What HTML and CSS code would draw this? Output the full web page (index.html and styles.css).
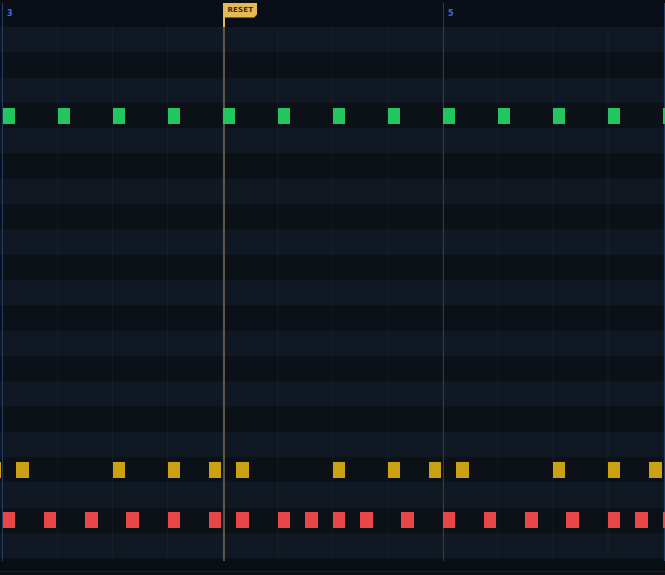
FILE: index.html
```html
<!DOCTYPE html>
<html lang="en">
<head>
    <meta charset="UTF-8">
    <meta name="viewport" content="width=device-width, initial-scale=1.0">
    <title>Pattern Roll</title>
    <link rel="stylesheet" href="styles.css">
</head>
<body>
    <div class="roll" id="roll">
        <div class="ruler" id="ruler"></div>
        <div class="lanes" id="lanes"></div>

        <div class="playhead">
            <div class="playhead-pole"></div>
            <div class="flag">RESET</div>
        </div>
    </div>
    <div class="footer"></div>

    <script>
        const STEP = 13.754;        // one 16th
        const ORIGIN = 2.5;
        const BAR_X = [2, 222.5, 443, 663.5];
        const LANE_COUNT = 21;

        const ruler = document.getElementById('ruler');
        const lanes = document.getElementById('lanes');
        const roll = document.getElementById('roll');

        const tracks = {
            3: { color: 'green', steps: [0, 4, 8, 12, 16, 20, 24, 28, 32, 36, 40, 44, 48] },
            17: { color: 'yellow', steps: [-1, 1, 8, 12, 15, 17, 24, 28, 31, 33, 40, 44, 47] },
            19: { color: 'red', steps: [0, 3, 6, 9, 12, 15, 17, 20, 22, 24, 26, 29, 32, 35, 38, 41, 44, 46, 48] }
        };

        for (let i = 0; i < LANE_COUNT; i++) {
            const lane = document.createElement('div');
            lane.className = i % 2 === 0 ? 'lane lane-light' : 'lane lane-dark';

            const track = tracks[i];
            if (track) {
                track.steps.forEach(step => {
                    const note = document.createElement('div');
                    note.className = 'note note-' + track.color;
                    note.style.left = (ORIGIN + step * STEP) + 'px';
                    lane.appendChild(note);
                });
            }
            lanes.appendChild(lane);
        }

        // bar lines + labels (bar 3 starts at the left edge, bar 4 sits under the playhead)
        BAR_X.forEach((x, b) => {
            const line = document.createElement('div');
            line.className = 'bar-line';
            line.style.left = x + 'px';
            roll.appendChild(line);

            if (b === 0 || b === 2) {
                const label = document.createElement('span');
                label.className = 'bar-label';
                label.textContent = 3 + b;
                label.style.left = (x + 5) + 'px';
                ruler.appendChild(label);
            }
        });
    </script>
</body>
</html>
```

FILE: styles.css
```css
body {
    margin: 0;
    padding: 0;
    background-color: #0a0e15;
    font-family: "DejaVu Sans", sans-serif;
    overflow: hidden;
}
.roll {
    position: relative;
    width: 665px;
    height: 561px;
    overflow: hidden;
    background-color: #0b0f16;
}
.ruler {
    position: relative;
    height: 27px;
    background-color: #0a0e17;
}
.bar-label {
    position: absolute;
    top: 9px;
    font-size: 8px;
    font-weight: bold;
    color: #3a6fd6;
}
.lanes {
    display: flex;
    flex-direction: column;
}
.lane {
    position: relative;
    height: 25.3px;
    background-image: linear-gradient(to right, rgba(255, 255, 255, 0.03) 1px, transparent 1px);
    background-size: 55.05px 100%;
    background-position: 2px 0;
}
.lane-light {
    background-color: #101923;
}
.lane-dark {
    background-color: #0c1017;
}
.note {
    position: absolute;
    z-index: 6;
    top: 4.65px;
    width: 12.6px;
    height: 16px;
}
.note-green {
    background-color: #22c55e;
}
.note-yellow {
    background-color: #cba114;
}
.note-red {
    background-color: #e94747;
}
.bar-line {
    position: absolute;
    z-index: 4;
    top: 3px;
    bottom: 0;
    width: 1px;
    background-color: #223d66;
}
.playhead {
    position: absolute;
    z-index: 5;
    top: 3px;
    bottom: 0;
    left: 222.5px;
    width: 2px;
    background-color: #5b5748;
}
.playhead-pole {
    height: 24px;
    background-color: #e3b75a;
}
.flag {
    position: absolute;
    top: 0;
    left: 0;
    height: 14.5px;
    line-height: 14.5px;
    padding: 0 4px 0 5px;
    background-color: #e5b858;
    color: #3a2c0c;
    font-size: 7px;
    font-weight: bold;
    letter-spacing: 0.2px;
    clip-path: polygon(0 0, 100% 0, 100% 75%, calc(100% - 3px) 100%, 0 100%);
}
.footer {
    height: 10px;
    border-bottom: 1px solid #171e29;
}
```
